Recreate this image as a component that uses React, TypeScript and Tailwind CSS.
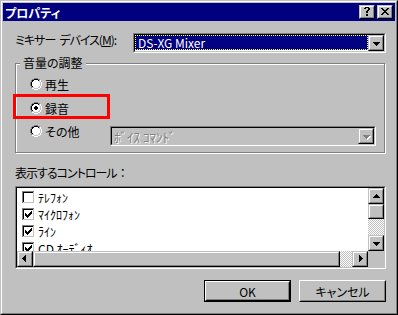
import React from "react";

const PAL: Record<string, string> = {
  G: "#808080",
  K: "#000000",
  W: "#ffffff",
  L: "#c0c0c0",
};

function Pix({ rows }: { rows: string[] }) {
  const h = rows.length;
  const w = rows[0].length;
  const rects: React.ReactElement[] = [];
  rows.forEach((r, y) => {
    for (let x = 0; x < w; x++) {
      const fill = PAL[r[x]];
      if (fill) rects.push(<rect key={x + "-" + y} x={x} y={y} width={1} height={1} fill={fill} />);
    }
  });
  return (
    <svg width={w} height={h} viewBox={`0 0 ${w} ${h}`} shapeRendering="crispEdges" className="block shrink-0">
      {rects}
    </svg>
  );
}

type Layer = { pat: string[]; x: number; y: number; c: string };
function place(w: number, h: number, layers: Layer[]) {
  const grid = Array.from({ length: h }, () => Array(w).fill("."));
  for (const l of layers)
    l.pat.forEach((r, j) => {
      for (let i = 0; i < r.length; i++) if (r[i] !== ".") grid[l.y + j][l.x + i] = l.c;
    });
  return grid.map((r) => r.join(""));
}

const DOWN = ["KKKKKKK", ".KKKKK.", "..KKK..", "...K..."];
const UP = ["...K...", "..KKK..", ".KKKKK.", "KKKKKKK"];
const LEFT = ["...K", "..KK", ".KKK", "KKKK", ".KKK", "..KK", "...K"];
const RIGHT = ["K...", "KK..", "KKK.", "KKKK", "KKK.", "KK..", "K..."];
const XPAT = ["KK....KK", ".KK..KK.", "..KKKK..", "...KK...", "..KKKK..", ".KK..KK.", "KK....KK"];
const QPAT = ["..KKKK..", ".KK..KK.", ".....KK.", "....KK..", "...KK...", "...KK...", "........", "...KK...", "...KK..."];

const ARROW_DOWN = place(12, 12, [{ pat: DOWN, x: 3, y: 5, c: "K" }]);
const ARROW_UP = place(12, 12, [{ pat: UP, x: 3, y: 4, c: "K" }]);
const ARROW_LEFT = place(12, 12, [{ pat: LEFT, x: 3, y: 2, c: "K" }]);
const ARROW_RIGHT = place(12, 12, [{ pat: RIGHT, x: 5, y: 2, c: "K" }]);
const ARROW_DOWN_DIS = place(12, 12, [
  { pat: DOWN, x: 4, y: 6, c: "W" },
  { pat: DOWN, x: 3, y: 5, c: "G" },
]);
const GLYPH_X = place(12, 10, [{ pat: XPAT, x: 2, y: 1, c: "K" }]);
const GLYPH_Q = place(12, 10, [{ pat: QPAT, x: 2, y: 0, c: "K" }]);

function radioRows(checked: boolean) {
  const dot = [".XX.", "XXXX", "XXXX", ".XX."];
  const rows: string[] = [];
  for (let y = 0; y < 12; y++) {
    let s = "";
    for (let x = 0; x < 12; x++) {
      const dx = x + 0.5 - 6;
      const dy = y + 0.5 - 6;
      const d = Math.sqrt(dx * dx + dy * dy);
      const tl = x + y <= 10;
      let c = ".";
      if (d >= 6) c = ".";
      else if (d >= 5) c = tl ? "G" : "W";
      else if (d >= 4.3) c = tl ? "K" : "L";
      else {
        c = "W";
        if (checked && x >= 4 && x <= 7 && y >= 4 && y <= 7 && dot[y - 4][x - 4] === "X") c = "K";
      }
      s += c;
    }
    rows.push(s);
  }
  return rows;
}

function checkboxRows(checked: boolean) {
  const check = ["......X", ".....XX", "X...XXX", "XX.XXX.", "XXXXX..", ".XXX...", "..X...."];
  const rows: string[] = [];
  for (let y = 0; y < 13; y++) {
    let s = "";
    for (let x = 0; x < 13; x++) {
      let c: string;
      if (x === 12 || y === 12) c = "W";
      else if (x === 0 || y === 0) c = "G";
      else if (x === 11 || y === 11) c = "L";
      else if (x === 1 || y === 1) c = "K";
      else {
        c = "W";
        if (checked && x >= 3 && x <= 9 && y >= 3 && y <= 9 && check[y - 3][x - 3] === "X") c = "K";
      }
      s += c;
    }
    rows.push(s);
  }
  return rows;
}

function Bevel3({ className = "", children }: { className?: string; children?: React.ReactNode }) {
  return (
    <div className={"shrink-0 border border-t-[#c0c0c0] border-l-[#c0c0c0] border-r-black border-b-black " + className}>
      <div className="h-full w-full border border-t-white border-l-white border-r-[#808080] border-b-[#808080] bg-[#c0c0c0]">
        {children}
      </div>
    </div>
  );
}

function Sunken({
  className = "",
  innerClassName = "",
  children,
}: {
  className?: string;
  innerClassName?: string;
  children?: React.ReactNode;
}) {
  return (
    <div className={"border border-t-[#808080] border-l-[#808080] border-r-white border-b-white " + className}>
      <div className={"h-full w-full border border-t-black border-l-black border-r-[#c0c0c0] border-b-[#c0c0c0] " + innerClassName}>
        {children}
      </div>
    </div>
  );
}

function Radio({ checked, label }: { checked: boolean; label: string }) {
  return (
    <div className="flex h-[16px] items-center gap-[3px]">
      <Pix rows={radioRows(checked)} />
      <span>{label}</span>
    </div>
  );
}

const ITEMS: [string, boolean][] = [
  ["ﾃﾚﾌｫﾝ", false],
  ["ﾏｲｸﾛﾌｫﾝ", true],
  ["ﾗｲﾝ", true],
  ["CD ｵｰﾃﾞｨｵ", true],
];

export default function App() {
  return (
    <div className="relative h-[315px] w-[398px] overflow-hidden border border-t-[#c0c0c0] border-l-[#c0c0c0] border-r-black border-b-black bg-[#c0c0c0] font-['Noto_Sans_CJK_JP',sans-serif] text-[12px] leading-[13px] text-black [font-feature-settings:'palt']">
      <div className="flex h-full flex-col border border-t-white border-l-white border-r-[#808080] border-b-[#808080] p-[1px]">
        {/* title bar */}
        <div className="flex h-[18px] items-center bg-[#000080] px-[2px]">
          <span className="font-bold text-white">プロパティ</span>
          <div className="ml-auto flex gap-[2px]">
            <Bevel3 className="h-[14px] w-[16px]">
              <Pix rows={GLYPH_Q} />
            </Bevel3>
            <Bevel3 className="h-[14px] w-[16px]">
              <Pix rows={GLYPH_X} />
            </Bevel3>
          </div>
        </div>

        {/* body */}
        <div className="flex flex-1 flex-col pl-[12px] pr-[9px]">
          {/* mixer device */}
          <div className="mt-[12px] flex h-[20px]">
            <div className="w-[118px] self-start whitespace-nowrap">
              <span className="tracking-[-1px]">ミキサー</span>
              <span className="ml-[4px] tracking-[-1px]">
                デバイス(<span className="underline">M</span>):
              </span>
            </div>
            <Sunken className="h-[20px] w-[253px]" innerClassName="flex bg-white">
              <div className="flex-1 pb-[1px]">
                <div className="flex h-full items-center border border-dotted border-[#ffff80] bg-[#000080] pl-[2px] text-white">
                  DS-XG Mixer
                </div>
              </div>
              <Bevel3 className="h-[16px] w-[16px]">
                <Pix rows={ARROW_DOWN} />
              </Bevel3>
            </Sunken>
          </div>

          {/* volume group */}
          <div className="mt-[10px] w-[370px] border border-[#808080] shadow-[inset_1px_1px_0_#fff,1px_1px_0_#fff]">
            <div className="-mt-[8px] ml-[4px] w-fit bg-[#c0c0c0] px-[3px]">音量の調整</div>
            <div className="pb-[6px] pl-[14px]">
              <div className="mt-[7px]">
                <Radio checked={false} label="再生" />
              </div>
              <div className="mt-[8px]">
                <Radio checked={true} label="録音" />
              </div>
              <div className="mt-[7px] flex items-start">
                <div className="w-[80px]">
                  <Radio checked={false} label="その他" />
                </div>
                <Sunken className="mt-[3px] h-[20px] w-[266px]" innerClassName="flex bg-[#c0c0c0]">
                  <div className="flex flex-1 items-center pl-[2px] text-[#808080] [font-feature-settings:normal] [text-shadow:1px_1px_0_#fff]">
                    <span className="block text-[13px] leading-[13px]">ﾎﾞｲｽ ｺﾏﾝﾄﾞ</span>
                  </div>
                  <Bevel3 className="h-[16px] w-[16px]">
                    <Pix rows={ARROW_DOWN_DIS} />
                  </Bevel3>
                </Sunken>
              </div>
            </div>
          </div>

          {/* controls label */}
          <div className="mt-[13px] whitespace-nowrap">
            <span className="tracking-[-1px]">表示するコントロール</span>
            <span className="ml-[3px]">：</span>
          </div>

          {/* list box */}
          <Sunken className="mt-[7px] h-[83px]" innerClassName="grid grid-cols-[1fr_16px] grid-rows-[1fr_16px]">
            <div className="overflow-hidden bg-white pl-[5px] pt-[1px]">
              {ITEMS.map(([label, checked]) => (
                <div key={label} className="flex h-[17px] items-center gap-[3px]">
                  <Pix rows={checkboxRows(checked)} />
                  <span className="[font-feature-settings:normal]">{label}</span>
                </div>
              ))}
            </div>
            <div className="flex flex-col">
              <Bevel3 className="h-[16px] w-[16px]">
                <Pix rows={ARROW_UP} />
              </Bevel3>
              <Bevel3 className="h-[15px] w-[16px]" />
              <div className="flex-1 bg-[repeating-conic-gradient(#c0c0c0_0_25%,#ffffff_0_50%)] bg-[length:2px_2px]" />
              <Bevel3 className="h-[16px] w-[16px]">
                <Pix rows={ARROW_DOWN} />
              </Bevel3>
            </div>
            <div className="flex">
              <Bevel3 className="h-[16px] w-[16px]">
                <Pix rows={ARROW_LEFT} />
              </Bevel3>
              <Bevel3 className="h-[16px] w-[307px]" />
              <div className="flex-1 bg-[repeating-conic-gradient(#c0c0c0_0_25%,#ffffff_0_50%)] bg-[length:2px_2px]" />
              <Bevel3 className="h-[16px] w-[16px]">
                <Pix rows={ARROW_RIGHT} />
              </Bevel3>
            </div>
            <div className="bg-[#c0c0c0]" />
          </Sunken>

          {/* buttons */}
          <div className="mt-[11px] flex justify-end gap-[8px]">
            <div className="h-[22px] w-[87px] border border-black">
              <div className="h-full border border-t-white border-l-white border-r-black border-b-black">
                <div className="flex h-full items-center justify-center border border-t-[#c0c0c0] border-l-[#c0c0c0] border-r-[#808080] border-b-[#808080]">
                  OK
                </div>
              </div>
            </div>
            <div className="h-[22px] w-[87px] border border-t-white border-l-white border-r-black border-b-black">
              <div className="flex h-full items-center justify-center border border-t-[#c0c0c0] border-l-[#c0c0c0] border-r-[#808080] border-b-[#808080]">
                キャンセル
              </div>
            </div>
          </div>
        </div>
      </div>

      {/* red annotation */}
      <div className="absolute left-[12px] top-[93px] h-[25px] w-[97px] border-[3px] border-[#ff0000]" />
    </div>
  );
}
